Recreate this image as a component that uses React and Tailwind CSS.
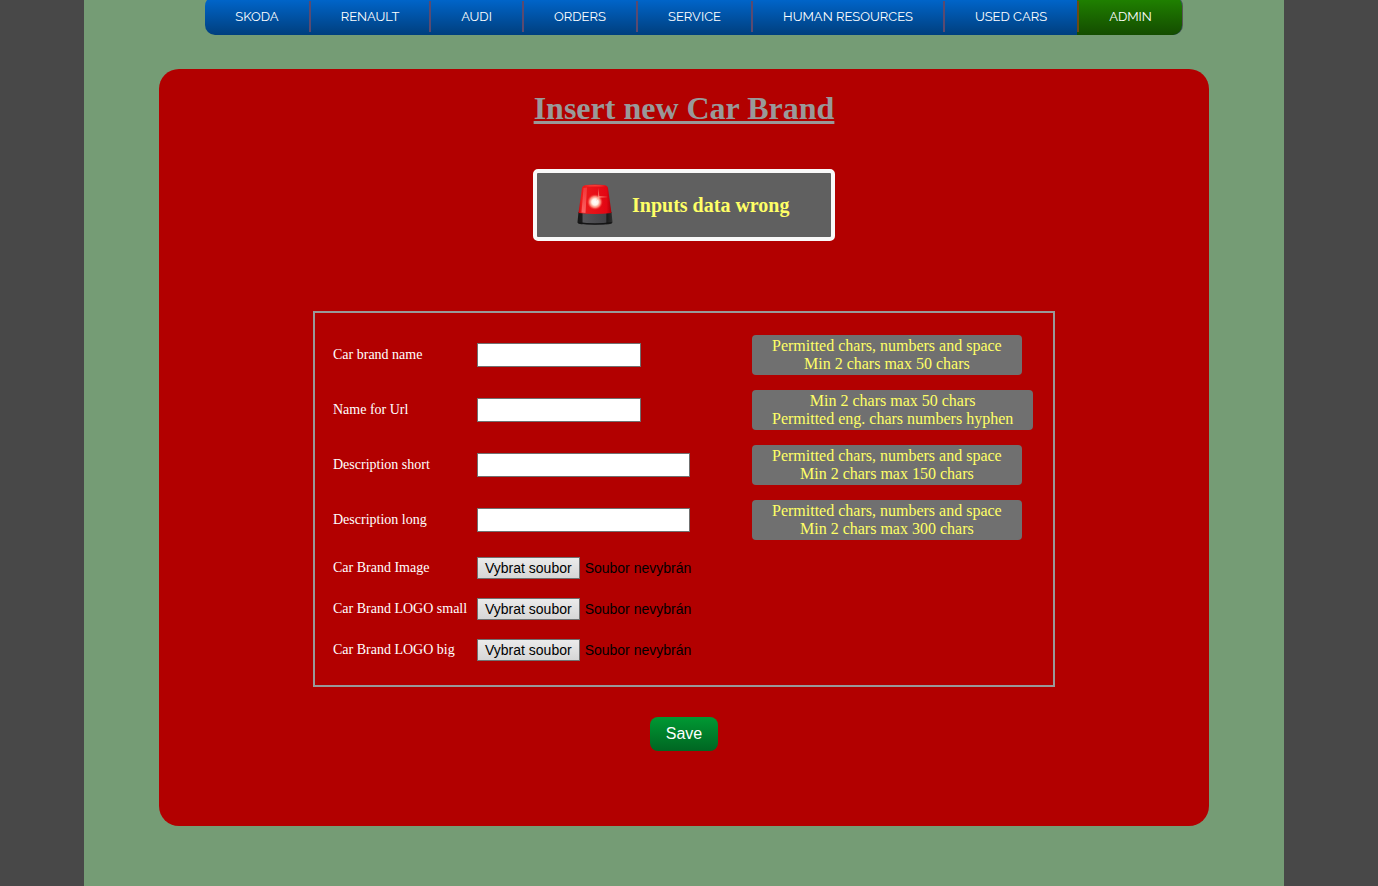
const navItems = [
  { label: "SKODA", width: "w-[104px]" },
  { label: "RENAULT", width: "w-[120px]", divider: "bg-[#5a4a70]" },
  { label: "AUDI", width: "w-[93px]", divider: "bg-[#5a4a70]" },
  { label: "ORDERS", width: "w-[114px]", divider: "bg-[#5a4a70]" },
  { label: "SERVICE", width: "w-[115px]", divider: "bg-[#5a4a70]" },
  { label: "HUMAN RESOURCES", width: "w-[192px]", divider: "bg-[#5a4a70]" },
  { label: "USED CARS", width: "w-[134px]", divider: "bg-[#5a4a70]" },
  { label: "ADMIN", width: "w-[105px]", divider: "bg-[#6b4a14]", active: true },
];

const textFields = [
  { id: "brand-name", label: "Car brand name", width: "w-[164px]", hint: ["Permitted chars, numbers and space", "Min 2 chars max 50 chars"] },
  { id: "brand-url", label: "Name for Url", width: "w-[164px]", hint: ["Min 2 chars max 50 chars", "Permitted eng. chars numbers hyphen"] },
  { id: "desc-short", label: "Description short", width: "w-[213px]", hint: ["Permitted chars, numbers and space", "Min 2 chars max 150 chars"] },
  { id: "desc-long", label: "Description long", width: "w-[213px]", hint: ["Permitted chars, numbers and space", "Min 2 chars max 300 chars"] },
];

const fileFields = [
  { id: "brand-image", label: "Car Brand Image" },
  { id: "logo-small", label: "Car Brand LOGO small" },
  { id: "logo-big", label: "Car Brand LOGO big" },
];

function Nav() {
  return (
    <nav className="-mt-1 ml-[121px] flex h-[39px] w-fit overflow-hidden rounded-[10px] border-r border-[#555] bg-linear-to-b from-[#0069d2] to-[#003f7e]">
      {navItems.map((item) => (
        <a
          key={item.label}
          href="#"
          className={`${item.width} flex items-start pt-[5px] text-[13px] leading-4 whitespace-nowrap text-white ${
            item.active ? "bg-linear-to-b from-[#208600] to-[#144c00]" : ""
          }`}
        >
          {item.divider && <span className={`h-[31px] w-[2px] ${item.divider}`} />}
          <span className="flex h-[31px] grow items-center justify-center">{item.label}</span>
        </a>
      ))}
    </nav>
  );
}

function Siren() {
  return (
    <svg viewBox="0 0 36 42" className="h-[42px] w-9 shrink-0" aria-hidden="true">
      <defs>
        <linearGradient id="dome" x1="0" x2="1">
          <stop offset="0" stopColor="#c9000b" />
          <stop offset="0.08" stopColor="#ec1c1c" />
          <stop offset="0.85" stopColor="#e30613" />
          <stop offset="1" stopColor="#a80008" />
        </linearGradient>
        <linearGradient id="shine" x1="0" y1="0" x2="0" y2="1">
          <stop offset="0" stopColor="#f66" stopOpacity="0.4" />
          <stop offset="1" stopColor="#f77" stopOpacity="0.8" />
        </linearGradient>
        <linearGradient id="base" x1="0" x2="1">
          <stop offset="0" stopColor="#161616" />
          <stop offset="0.13" stopColor="#1c1c1c" />
          <stop offset="0.16" stopColor="#56565a" />
          <stop offset="0.8" stopColor="#434347" />
          <stop offset="0.84" stopColor="#1c1c1c" />
          <stop offset="1" stopColor="#303030" />
        </linearGradient>
        <radialGradient id="glow">
          <stop offset="0" stopColor="#fff" />
          <stop offset="0.4" stopColor="#fff2e6" />
          <stop offset="0.7" stopColor="#ffa08a" stopOpacity="0.8" />
          <stop offset="1" stopColor="#f33" stopOpacity="0" />
        </radialGradient>
      </defs>
      <path d="M1.5 28 0.5 38Q0 39.5 4 40.3Q18 41.7 32 40.3Q36 39.500 35.500 38L34.500 28Z" fill="url(#base)" />
      <path d="M1 38Q18 40.500 35 38L34.500 39.500Q18 42 1.500 39.500Z" fill="#151515" />
      <path d="M1.500 29 5 4Q5.500 1.500 9 1Q18 0 27 1Q30.500 1.500 31 4L34.500 29Q18 31 1.500 29Z" fill="url(#dome)" />
      <path d="M6.500 4 10 3.500 8.500 29 4.500 28.500Z" fill="url(#shine)" />
      <path d="M7 2Q18 0 29 2Q18 3 7 2Z" fill="#ff5a4a" opacity="0.6" />
      <circle cx="18" cy="18" r="8" fill="url(#glow)" />
      <path d="M21.500 4 22.300 12 31 13 22.500 13.800 19 17 21 12.500Z" fill="#ffb199" opacity="0.6" />
    </svg>
  );
}

export default function App() {
  return (
    <div className="min-h-screen bg-[#484848] pr-[10px] font-['Liberation_Serif',serif]">
      <div className="mx-auto min-h-screen max-w-[1200px] bg-[#759c75] pb-[60px]">
        <header className="font-[Raleway,Inter,sans-serif]">
          <Nav />
        </header>
        <main className="mx-auto mt-[34px] flex max-w-[1050px] flex-col items-center rounded-[20px] bg-[#b20000] pt-[21px] pb-[75px]">
          <h1 className="text-[32px] leading-[37px] font-bold text-[#999] underline decoration-[3px]">Insert new Car Brand</h1>
          <div role="alert" className="mt-[42px] flex h-[72px] w-[302px] items-center gap-[19px] rounded-[5px] border-4 border-[#f9f9f9] bg-[#606060] pl-10">
            <Siren />
            <strong className="text-[20px] leading-[22px] whitespace-nowrap text-[#ffff66]">Inputs data wrong</strong>
          </div>
          <form className="mt-[70px] flex flex-col items-center" onSubmit={(e) => e.preventDefault()}>
            <div className="flex flex-col gap-[17px] border-2 border-[#999] px-[18px] pt-[22px] pb-6">
              <div className="flex flex-col gap-[15px]">
                {textFields.map((field) => (
                  <div key={field.id} className="grid grid-cols-[144px_275px_283px] items-center">
                    <label htmlFor={field.id} className="text-[14px] leading-4 text-white">{field.label}</label>
                    <input id={field.id} type="text" className={`${field.width} h-6 border border-[#707070] bg-white px-1 text-sm text-black`} />
                    <p className="w-fit rounded-[4px] bg-[#707070] px-5 py-[2px] text-center text-[16px] leading-[18px] whitespace-nowrap text-[#ffff66]">
                      {field.hint[0]}
                      <br />
                      {field.hint[1]}
                    </p>
                  </div>
                ))}
              </div>
              <div className="flex flex-col gap-[19px]">
                {fileFields.map((field) => (
                  <div key={field.id} className="grid grid-cols-[144px_275px_283px] items-center">
                    <label htmlFor={field.id} className="text-[14px] leading-4 text-white">{field.label}</label>
                    <label className="relative flex items-center gap-[5px] font-['Liberation_Sans',sans-serif] text-[14px] leading-5 whitespace-nowrap text-black">
                      <input id={field.id} type="file" className="sr-only" />
                      <span className="border border-[#707070] bg-linear-to-b from-[#ebebeb] to-[#d6d6d6] px-[7px]">Vybrat soubor</span>
                      <span>Soubor nevybrán</span>
                    </label>
                  </div>
                ))}
              </div>
            </div>
            <button type="submit" className="mt-[30px] h-[34px] rounded-[8px] bg-linear-to-b from-[#009933] to-[#006622] px-4 font-['Liberation_Sans',sans-serif] text-[16px] leading-5 text-white">
              Save
            </button>
          </form>
        </main>
      </div>
    </div>
  );
}
